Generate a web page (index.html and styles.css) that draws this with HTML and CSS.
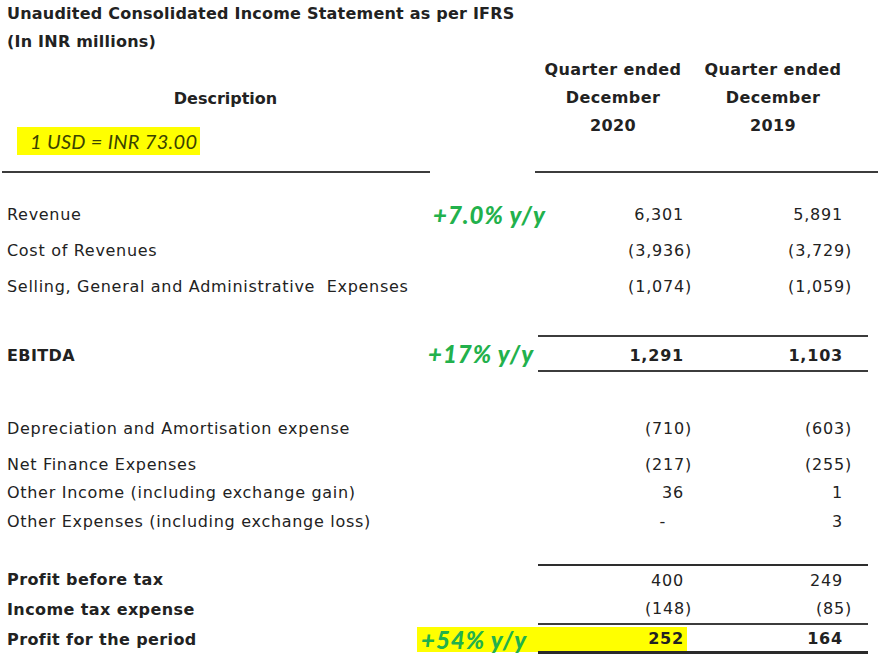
FILE: index.html
```html
<!DOCTYPE html>
<html>
<head>
<meta charset="utf-8">
<link rel="stylesheet" href="styles.css">
</head>
<body>
<div class="sheet">
  <div class="title">
    <div>Unaudited Consolidated Income Statement as per IFRS</div>
    <div>(In INR millions)</div>
  </div>

  <div class="head">
    <div class="head-desc">
      <div class="desc">Description</div>
      <div class="rate">1 USD = INR 73.00</div>
    </div>
    <div class="head-cols">
      <div class="qh qh1">Quarter ended<br>December<br>2020</div>
      <div class="qh qh2">Quarter ended<br>December<br>2019</div>
    </div>
  </div>

  <div class="row r-rev">
    <div class="lbl">Revenue</div>
    <div class="ann a-rev">+7.0% y/y</div>
    <div class="num c1 pos">6,301</div>
    <div class="num c2 pos">5,891</div>
  </div>
  <div class="row r-cost">
    <div class="lbl">Cost of Revenues</div>
    <div class="ann"></div>
    <div class="num c1">(3,936)</div>
    <div class="num c2">(3,729)</div>
  </div>
  <div class="row r-sga">
    <div class="lbl">Selling, General and Administrative&nbsp; Expenses</div>
    <div class="ann"></div>
    <div class="num c1">(1,074)</div>
    <div class="num c2">(1,059)</div>
  </div>

  <div class="row r-ebitda bold">
    <div class="lbl">EBITDA</div>
    <div class="ann a-ebitda">+17% y/y</div>
    <div class="num c1 pos ruled">1,291</div>
    <div class="num c2 pos ruled">1,103</div>
  </div>

  <div class="row r-dep">
    <div class="lbl">Depreciation and Amortisation expense</div>
    <div class="ann"></div>
    <div class="num c1">(710)</div>
    <div class="num c2">(603)</div>
  </div>
  <div class="row r-fin">
    <div class="lbl">Net Finance Expenses</div>
    <div class="ann"></div>
    <div class="num c1">(217)</div>
    <div class="num c2">(255)</div>
  </div>
  <div class="row r-oi">
    <div class="lbl">Other Income (including exchange gain)</div>
    <div class="ann"></div>
    <div class="num c1 pos">36</div>
    <div class="num c2 pos">1</div>
  </div>
  <div class="row r-oe">
    <div class="lbl">Other Expenses (including exchange loss)</div>
    <div class="ann"></div>
    <div class="num c1 dash">-</div>
    <div class="num c2 pos">3</div>
  </div>

  <div class="row r-pbt">
    <div class="lbl b">Profit before tax</div>
    <div class="ann"></div>
    <div class="num c1 pos top-rule">400</div>
    <div class="num c2 pos top-rule">249</div>
  </div>
  <div class="row r-tax">
    <div class="lbl b">Income tax expense</div>
    <div class="ann"></div>
    <div class="num c1 bot-rule">(148)</div>
    <div class="num c2 bot-rule">(85)</div>
  </div>
  <div class="row r-profit bold">
    <div class="lbl">Profit for the period</div>
    <div class="ann a-profit">+54% y/y</div>
    <div class="num c1 pos total-rule">252</div>
    <div class="num c2 pos total-rule">164</div>
  </div>
</div>
</body>
</html>
```

FILE: styles.css
```css
html, body {
  margin: 0;
  padding: 0;
  background: #ffffff;
}

.sheet {
  width: 878px;
  height: 666px;
  overflow: hidden;
  font-family: "DejaVu Sans", Verdana, sans-serif;
  font-size: 16px;
  color: #222222;
}

.title {
  padding-left: 7px;
  font-weight: bold;
  font-size: 16px;
  line-height: 28px;
  letter-spacing: 0.22px;
}

/* ---------- header ---------- */
.head {
  display: flex;
  height: 117px;
}

.head-desc {
  margin-left: 2px;
  width: 428px;
  border-bottom: 2px solid #3c3c3c;
  box-sizing: border-box;
}

.desc {
  margin-top: 33px;
  padding-left: 19px;
  text-align: center;
  font-weight: bold;
  font-size: 16px;
  line-height: 20px;
}

.rate {
  margin-top: 18px;
  margin-left: 15px;
  width: 183px;
  height: 28px;
  box-sizing: border-box;
  padding-left: 13px;
  background: #ffff00;
  font-family: Lato, "Liberation Sans", sans-serif;
  font-style: italic;
  font-size: 20px;
  line-height: 28px;
  letter-spacing: 0.3px;
  color: #3b4300;
}

.head-cols {
  margin-left: 105px;
  flex: 1;
  display: flex;
  border-bottom: 2px solid #3c3c3c;
  box-sizing: border-box;
}

.qh {
  text-align: center;
  font-weight: bold;
  font-size: 16px;
  line-height: 28px;
  letter-spacing: 0.4px;
}

.qh1 { width: 156px; }
.qh2 { width: 164px; }

/* ---------- rows ---------- */
.row {
  display: grid;
  grid-template-columns: 415px 123px 162px 168px;
  height: 28px;
}

.row > div {
  display: flex;
  align-items: center;
  box-sizing: border-box;
  white-space: nowrap;
}

.lbl {
  padding-left: 7px;
  letter-spacing: 0.7px;
}

.bold .lbl,
.lbl.b {
  font-weight: bold;
  letter-spacing: 0.4px;
}

.bold .num { font-weight: bold; }

.num {
  justify-content: flex-end;
  letter-spacing: 0.8px;
}

.c1 { padding-right: 8px; }
.c2 { padding-right: 16px; }
.c1.pos { padding-right: 16px; }
.c2.pos { padding-right: 25px; }
.c1.dash { padding-right: 34px; }

.ann {
  font-family: Lato, "Liberation Sans", sans-serif;
  font-weight: 900;
  font-style: italic;
  font-size: 24px;
  letter-spacing: 1px;
  color: #22b14c;
  overflow: visible;
}

.a-rev { padding-left: 18px; }
.a-ebitda { padding-left: 13px; }
.a-profit { padding-left: 6px; }

.r-rev { margin-top: 27px; }
.r-cost { margin-top: 8px; }
.r-sga { margin-top: 8px; }

.r-ebitda {
  margin-top: 35px;
  height: 37px;
}
.r-ebitda > .lbl,
.r-ebitda > .num { padding-top: 4px; }
.ruled {
  border-top: 2px solid #3c3c3c;
  border-bottom: 2px solid #3c3c3c;
}

.r-dep { margin-top: 42px; }
.r-fin { margin-top: 8px; }
.r-oi { margin-top: 0; }
.r-oe { margin-top: 1px; }

.r-pbt {
  margin-top: 29px;
  height: 30px;
}
.top-rule { border-top: 2px solid #2e2e2e; }

.r-tax { height: 31px; }
.bot-rule { border-bottom: 2px solid #3c3c3c; }

.r-profit {
  height: 29px;
  background: linear-gradient(#ffff00, #ffff00) 417px 2px / 270px 25px no-repeat;
}
.total-rule { border-bottom: 3px solid #2a2a2a; }
```
